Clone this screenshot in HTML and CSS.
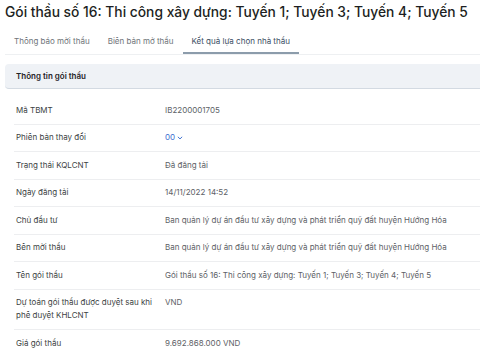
FILE: index.html
```html
<!DOCTYPE html>
<html lang="vi">
<head>
<meta charset="utf-8">
<link rel="stylesheet" href="styles.css">
</head>
<body>
<h1 class="title">Gói thầu số 16: Thi công xây dựng: Tuyến 1; Tuyến 3; Tuyến 4; Tuyến 5</h1>
<nav class="tabs">
  <span class="tab">Thông báo mời thầu</span>
  <span class="tab">Biên bản mở thầu</span>
  <span class="tab active">Kết quả lựa chọn nhà thầu</span>
</nav>
<div class="card-head">Thông tin gói thầu</div>
<div class="rows">
  <div class="row"><div class="label">Mã TBMT</div><div class="value">IB2200001705</div></div>
  <div class="row"><div class="label">Phiên bản thay đổi</div><div class="value"><span class="version">00<svg class="chev" viewBox="0 0 8 8" width="6" height="6"><path d="M1.5 2.8 L4 5.2 L6.5 2.8" fill="none" stroke="#3d6fd0" stroke-width="1.3" stroke-linecap="round" stroke-linejoin="round"/></svg></span></div></div>
  <div class="row"><div class="label">Trạng thái KQLCNT</div><div class="value">Đã đăng tải</div></div>
  <div class="row"><div class="label">Ngày đăng tải</div><div class="value">14/11/2022 14:52</div></div>
  <div class="row"><div class="label">Chủ đầu tư</div><div class="value">Ban quản lý dự án đầu tư xây dựng và phát triển quỹ đất huyện Hướng Hóa</div></div>
  <div class="row"><div class="label">Bên mời thầu</div><div class="value">Ban quản lý dự án đầu tư xây dựng và phát triển quỹ đất huyện Hướng Hóa</div></div>
  <div class="row"><div class="label">Tên gói thầu</div><div class="value">Gói thầu số 16: Thi công xây dựng: Tuyến 1; Tuyến 3; Tuyến 4; Tuyến 5</div></div>
  <div class="row"><div class="label">Dự toán gói thầu được duyệt sau khi phê duyệt KHLCNT</div><div class="value">VND</div></div>
  <div class="row"><div class="label">Giá gói thầu</div><div class="value">9.692.868.000 VND</div></div>
</div>
</body>
</html>
```

FILE: styles.css
```css
html, body {
  margin: 0;
  padding: 0;
  background: #ffffff;
  font-family: Inter, "Noto Sans", "Liberation Sans", sans-serif;
  overflow: hidden;
}
.title {
  margin: 0;
  padding: 0 0 0 5px;
  font-size: 13.8px;
  line-height: 24px;
  font-weight: 500;
  color: #1d1f22;
  white-space: nowrap;
}
.tabs {
  display: flex;
  margin: 4px 0 0 5px;
  border-bottom: 1px solid #eef0f2;
  height: 26px;
}
.tab {
  padding: 0 9px;
  font-size: 8px;
  line-height: 26px;
  color: #6f7479;
  white-space: nowrap;
}
.tab.active {
  color: #3a4e63;
  box-shadow: inset 0 -2px 0 #8c9cab;
}
.card-head {
  margin: 9px 0 0 5px;
  height: 24px;
  background: #eff2f6;
  border-bottom: 1px solid #d3dae2;
  border-radius: 4px 0 0 4px;
  padding-left: 11px;
  font-size: 8px;
  font-weight: 600;
  line-height: 24px;
  color: #1f2226;
}
.rows {
  margin: 8px 0 0 14px;
}
.row {
  display: flex;
  padding: 6.75px 0;
  border-bottom: 1px solid #edeef0;
  font-size: 8px;
  line-height: 13px;
}
.row:last-child {
  border-bottom: none;
}
.label {
  width: 147px;
  flex: none;
  padding: 0 2px;
  color: #3c3f43;
}
.value {
  color: #5d6166;
  white-space: nowrap;
}
.version {
  color: #3d6fd0;
  display: inline-flex;
  align-items: center;
  gap: 2px;
}
```
